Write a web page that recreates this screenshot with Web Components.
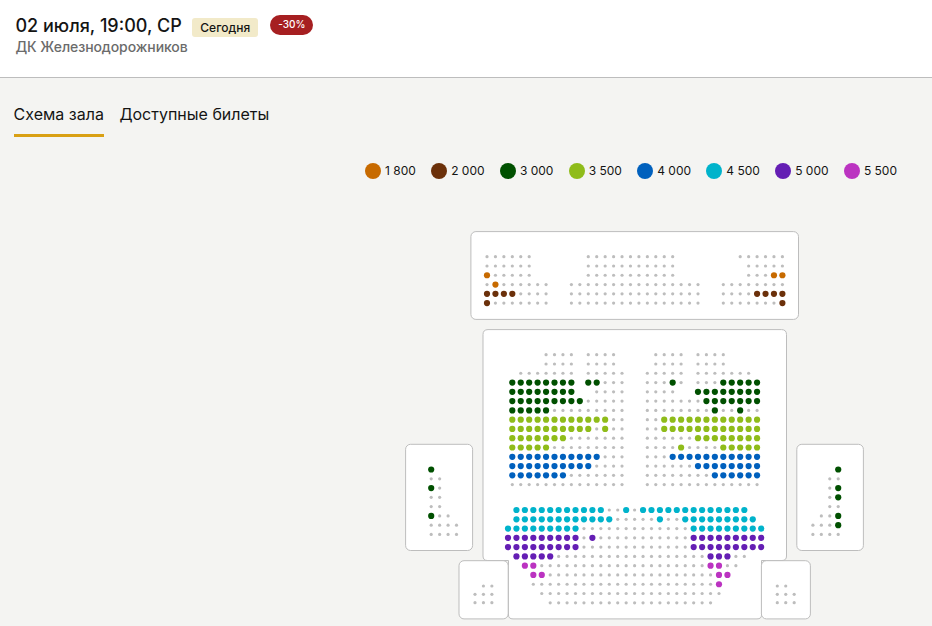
<!DOCTYPE html>
<html lang="ru">
<head>
<meta charset="utf-8">
<title>Схема зала</title>
<style>
    body {
        margin: 0;
        height: 626px;
        overflow: hidden;
        background: #f4f4f2;
        color: #141414;
        font-family: Inter, "Liberation Sans", sans-serif;
    }
</style>
</head>
<body>
<event-header>
    <span slot="date">02 июля, 19:00, СР</span>
    <event-badge slot="badges">Сегодня</event-badge>
    <event-badge slot="badges" kind="sale">-30%</event-badge>
    <span slot="place">ДК Железнодорожников</span>
</event-header>
<tab-bar>
    <tab-item active>Схема зала</tab-item>
    <tab-item>Доступные билеты</tab-item>
</tab-bar>
<price-legend>
    <price-item color="#c76a00">1 800</price-item>
    <price-item color="#6b300a">2 000</price-item>
    <price-item color="#005000">3 000</price-item>
    <price-item color="#8fbc1a">3 500</price-item>
    <price-item color="#0060bd">4 000</price-item>
    <price-item color="#00b3cb">4 500</price-item>
    <price-item color="#641eb4">5 000</price-item>
    <price-item color="#bb33c1">5 500</price-item>
</price-legend>
<hall-scheme></hall-scheme>

<script>
class EventHeader extends HTMLElement {
    constructor() {
        super();
        this.attachShadow({ mode: "open" });
    }

    connectedCallback() {
        this.shadowRoot.innerHTML = `
<style>
    :host {
        display: block;
        box-sizing: border-box;
        height: 78px;
        padding: 15px 15.5px 0;
        background: #fff;
        border-bottom: 1px solid #bdbdbd;
    }
    .top {
        display: flex;
        align-items: flex-start;
        height: 22px;
    }
    .date {
        font-size: 18px;
        line-height: 22px;
        font-weight: 500;
        margin-right: 10.5px;
        white-space: nowrap;
    }
    .badges {
        display: flex;
        gap: 12px;
    }
    .place {
        font-size: 14px;
        line-height: 20px;
        font-weight: 500;
        letter-spacing: -0.08px;
        color: #6b6b6b;
    }
</style>
<div class="top">
    <div class="date"><slot name="date"></slot></div>
    <div class="badges"><slot name="badges"></slot></div>
</div>
<div class="place"><slot name="place"></slot></div>
    `;
    }
}

class EventBadge extends HTMLElement {
    constructor() {
        super();
        this.attachShadow({ mode: "open" });
    }

    connectedCallback() {
        this.shadowRoot.innerHTML = `
<style>
    :host {
        display: block;
        box-sizing: border-box;
        width: 66px;
        height: 19px;
        margin-top: 3px;
        border-radius: 3px;
        background: #f2eac9;
        font-size: 12px;
        line-height: 19px;
        font-weight: 500;
        text-align: center;
    }
    :host([kind="sale"]) {
        width: 43px;
        height: 20px;
        margin-top: 0;
        border-radius: 10px;
        background: #a61f21;
        color: #fff;
        font-size: 10px;
    }
</style>
<slot></slot>
    `;
    }
}

class TabBar extends HTMLElement {
    constructor() {
        super();
        this.attachShadow({ mode: "open" });
    }

    connectedCallback() {
        this.shadowRoot.innerHTML = `
<style>
    :host {
        display: flex;
        gap: 15.5px;
        padding: 24px 13.6px 0;
    }
</style>
<slot></slot>
    `;
    }
}

class TabItem extends HTMLElement {
    constructor() {
        super();
        this.attachShadow({ mode: "open" });
    }

    connectedCallback() {
        this.shadowRoot.innerHTML = `
<style>
    :host {
        display: block;
        box-sizing: border-box;
        height: 35px;
        font-size: 16px;
        line-height: 25px;
        border-bottom: 3px solid transparent;
        white-space: nowrap;
    }
    :host([active]) {
        border-bottom-color: #d9a014;
    }
</style>
<slot></slot>
    `;
    }
}

class PriceLegend extends HTMLElement {
    constructor() {
        super();
        this.attachShadow({ mode: "open" });
    }

    connectedCallback() {
        this.shadowRoot.innerHTML = `
<style>
    :host {
        display: flex;
        justify-content: flex-end;
        gap: 15.3px;
        padding: 24px 35px 0;
        height: 20px;
    }
</style>
<slot></slot>
    `;
    }
}

class PriceItem extends HTMLElement {
    constructor() {
        super();
        this.attachShadow({ mode: "open" });
    }

    connectedCallback() {
        this.shadowRoot.innerHTML = `
<style>
    :host {
        display: flex;
        align-items: center;
        gap: 4px;
        font-size: 12px;
        line-height: 20px;
        white-space: nowrap;
    }
    i {
        width: 16px;
        height: 16px;
        border-radius: 50%;
        background: ${this.getAttribute("color")};
    }
</style>
<i></i>
<span><slot></slot></span>
    `;
    }
}

const PITCH_X = 8.44;
const PITCH_Y = 9.28;

const COLORS = {
    O: "#c76a00",
    W: "#6b300a",
    G: "#005000",
    L: "#8fbc1a",
    B: "#0060bd",
    C: "#00b3cb",
    P: "#641eb4",
    M: "#bb33c1",
};

// rows are runs of "<kind><count>": "_" is a gap, "." a taken seat, a letter a free one
const BLOCKS = [
    {
        x: 487, y: 256.7,
        rows: [
            ".6 _6 .11 _7 .6",
            ".6 _6 .11 _8 .5",
            "O1 .5 _6 .11 _8 .3 O2",
            ".1 O1 .6 _2 .16 _2 .8",
            "W4 .4 _2 .16 _2 .4 W4",
            "W1 .7 _2 .16 _2 .7 W1",
        ],
    },
    {
        x: 512.3, y: 354.7,
        rows: [
            "_4 .4 _1 .4 _4 .4 _1 .4",
            "_4 .4 _1 .4 _4 .4 _1 .4",
            "_1 .7 _1 .5 _2 .5 _1 .7",
            "G8 _1 G2 .3 _2 .3 G1 .1 _1 .3 G5",
            "G8 _2 .4 _2 .4 _2 G8",
            "G9 .5 _2 .7 G7",
            "G5 .9 _2 .8 G1 .2 G1 .2",
            "L12 .2 _2 .2 L12",
            "L10 .1 L1 .2 _2 .2 L12",
            "L7 .7 _2 .6 L8",
            "L5 .9 _2 .4 L1 .4 L5",
            "B11 .3 _2 .3 B11",
            "B10 .4 _2 .6 B8",
            "B7 .7 _2 .8 B6",
            ".14 _2 .14",
        ],
    },
    {
        x: 508, y: 510,
        rows: [
            "_1 C11 .2 C1 .1 C13",
            "_1 C12 .5 C1 .2 C9",
            "C9 .13 C9",
            "P9 .1 P1 .11 P9",
            "P9 .13 P9",
            "_1 P5 .18 P3 .2",
            "_2 M2 .20 M2 .2",
            "_3 M2 .20 M2",
            "_3 .22 M1",
            "_4 .22",
            "_5 .20",
        ],
    },
    {
        x: 431.2, y: 469.5,
        rows: ["G1", ".2", "G1 .1", ".2", ".2", "G1 .2", ".4", ".4"],
    },
    {
        x: 812.9, y: 469.5,
        rows: ["_3 G1", "_2 .2", "_2 .1 G1", "_2 .1 G1", "_2 .2", "_1 .2 G1", ".3 G1", ".4"],
    },
    { x: 475, y: 586, dy: 8.35, rows: ["_1 .2", ".3", ".3"] },
    { x: 777.3, y: 586, dy: 8.35, rows: [".2", ".3", ".3"] },
];

class HallScheme extends HTMLElement {
    constructor() {
        super();
        this.attachShadow({ mode: "open" });
    }

    connectedCallback() {
        this.shadowRoot.innerHTML = `
<style>
    :host {
        display: block;
        padding-top: 20px;
    }
    svg {
        display: block;
    }
    .wall {
        fill: #fff;
        stroke: #bdbdbd;
    }
</style>
<svg width="932" height="425" viewBox="0 201 932 425">
    <g class="wall">
        <rect x="470.9" y="231.6" width="327.6" height="87.8" rx="5"/>
        <path d="M488 329.6H781.5Q786.5 329.6 786.5 334.6V556Q786.5 560.5 782 560.5H761.5V615Q761.5 618.9 757 618.9H513Q508.5 618.9 508.5 615V560.5H487.5Q483 560.5 483 556V334.6Q483 329.6 488 329.6Z"/>
        <rect x="405.6" y="444.3" width="67" height="106.2" rx="5"/>
        <rect x="796.8" y="444.3" width="66.6" height="106.2" rx="5"/>
        <rect x="459" y="560.7" width="49.2" height="58.2" rx="5"/>
        <rect x="761.4" y="560.7" width="49" height="58.2" rx="5"/>
    </g>
    ${BLOCKS.map((block) => this.seats(block)).join("")}
</svg>
    `;
    }

    seats({ x, y, dy = PITCH_Y, rows }) {
        let out = "";
        rows.forEach((row, r) => {
            let col = 0;
            row.split(" ").forEach((run) => {
                const kind = run[0];
                const count = Number(run.slice(1));
                for (let i = 0; i < count; i++, col++) {
                    if (kind === "_") continue;
                    const cx = (x + col * PITCH_X).toFixed(2);
                    const cy = (y + r * dy).toFixed(2);
                    out += `<circle cx="${cx}" cy="${cy}" r="${kind === "." ? 1.6 : 3.1}" fill="${COLORS[kind] || "#bdbdbd"}"/>`;
                }
            });
        });
        return out;
    }
}

customElements.define("event-header", EventHeader);
customElements.define("event-badge", EventBadge);
customElements.define("tab-bar", TabBar);
customElements.define("tab-item", TabItem);
customElements.define("price-legend", PriceLegend);
customElements.define("price-item", PriceItem);
customElements.define("hall-scheme", HallScheme);
</script>
</body>
</html>
